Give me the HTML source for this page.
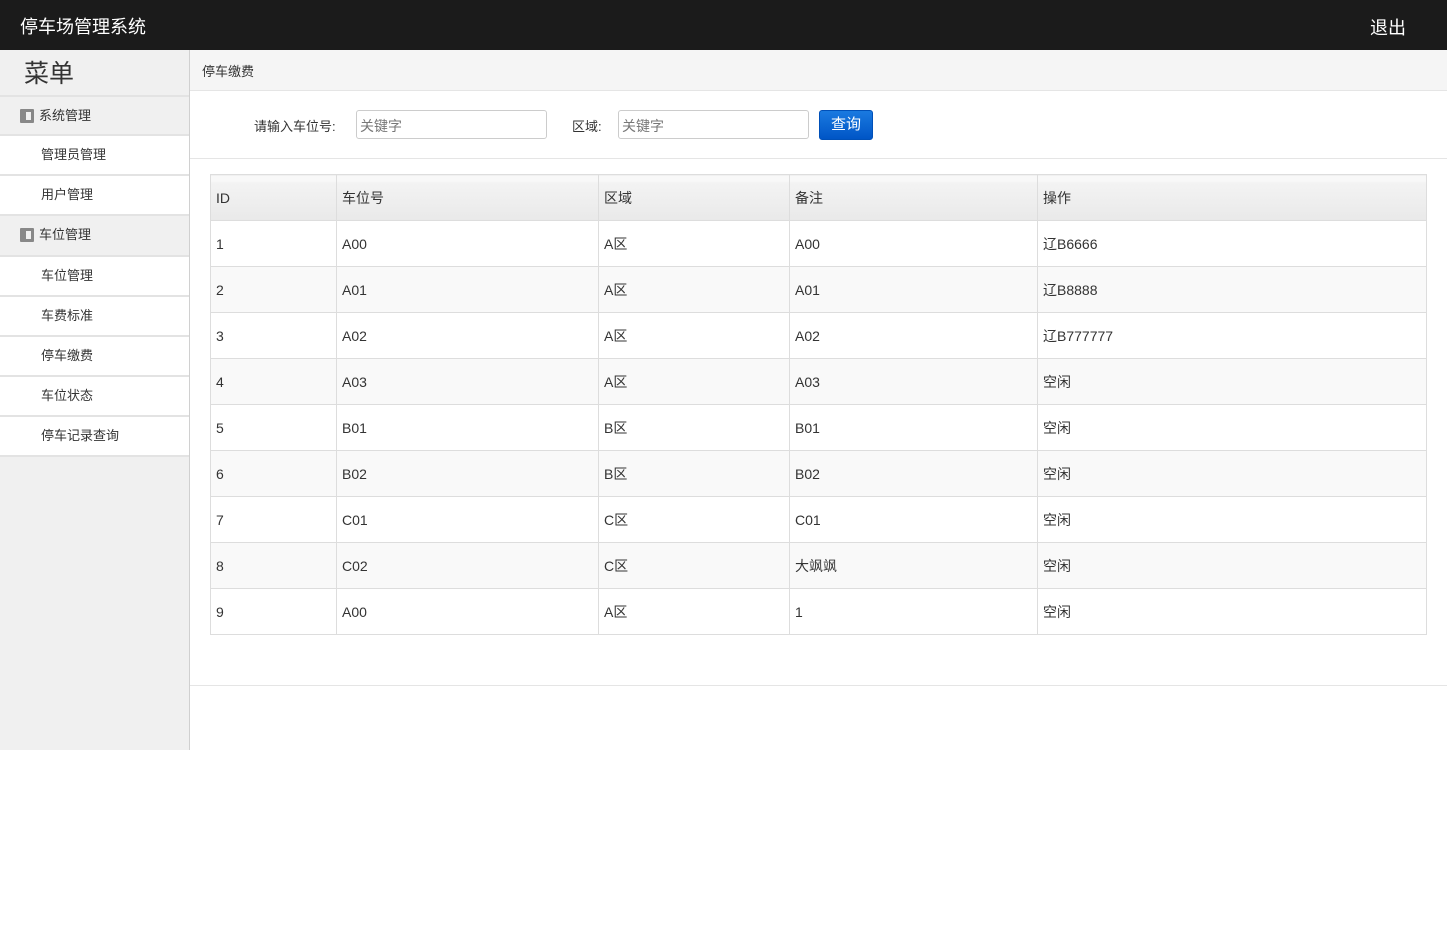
<!DOCTYPE html>
<html><head><meta charset="utf-8"><style>
*{margin:0;padding:0;box-sizing:border-box}
body{width:1447px;height:943px;background:#fff;font-family:"Liberation Sans","Noto Sans CJK SC",sans-serif;position:relative;overflow:hidden;color:#333}
.top{position:absolute;left:0;top:0;width:1447px;height:50px;background:#1b1b1b;color:#fff}
.top .t{position:absolute;left:20px;top:13px;font-size:18px}
.top .o{position:absolute;left:1370px;top:14px;font-size:18px}
.side{position:absolute;left:0;top:50px;width:190px;height:700px;background:#f0f0f0;border-right:1px solid #d0d0d0}
.menu{position:absolute;left:24px;top:54px;font-size:25px;color:#333}
.it{position:absolute;left:0;width:189px;height:38px;font-size:13px;line-height:38px}
.g{background:#f0f0f0;padding-left:39px;border-top:2px solid #e3e3e3}
.w{background:#fff;padding-left:41px}
.sep{position:absolute;left:0;width:189px;height:2px;background:#e3e3e3}
.ic{position:absolute;left:20px;top:12px;width:14px;height:14px;background:#888;border-radius:1px}
.ic:after{content:"";position:absolute;left:6px;top:3px;width:5px;height:8px;background:#f0f0f0}
.bc{position:absolute;left:190px;top:50px;width:1257px;height:41px;background:#f5f5f5;border-bottom:1px solid #e5e5e5;font-size:13px;padding:11px 0 0 12px}
.lbl{position:absolute;font-size:13px;top:116px}
.inp{position:absolute;top:110px;height:29px;border:1px solid #ccc;border-radius:3px;font-size:14px;color:#777;padding:5px 3px}
.btn{position:absolute;left:819px;top:110px;width:54px;height:30px;background:linear-gradient(#1a7ae0,#0055c6);border:1px solid #0050b8;border-radius:3px;color:#fff;font-size:15px;text-align:center;line-height:28px}
.hl{position:absolute;left:190px;width:1257px;height:1px;background:#e5e5e5}
table{position:absolute;left:210px;top:174px;width:1217px;border-collapse:collapse;font-size:14px}
td,th{border:1px solid #ddd;padding:0 5px;text-align:left;font-weight:normal;height:46px}
th{background:linear-gradient(#f8f8f8 0,#f8f8f8 6px,#f3f3f3 7px,#e9e9e9);height:46px}
tr:nth-child(odd) td{background:#f9f9f9}
</style></head><body>
<div class="top"><span class="t">停车场管理系统</span><span class="o">退出</span></div>
<div class="side"></div>
<div class="menu">菜单</div>
<div class="it g" style="top:95px;height:40px"><span class="ic"></span>系统管理</div>
<div class="sep" style="top:134px"></div>
<div class="it w" style="top:136px">管理员管理</div>
<div class="sep" style="top:174px"></div>
<div class="it w" style="top:176px">用户管理</div>
<div class="sep" style="top:214px;height:3px"></div>
<div class="it g" style="top:216px;height:40px;border-top:0"><span class="ic" style="top:12px"></span>车位管理</div>
<div class="sep" style="top:255px"></div>
<div class="it w" style="top:257px">车位管理</div>
<div class="sep" style="top:295px"></div>
<div class="it w" style="top:297px">车费标准</div>
<div class="sep" style="top:335px"></div>
<div class="it w" style="top:337px">停车缴费</div>
<div class="sep" style="top:375px"></div>
<div class="it w" style="top:377px">车位状态</div>
<div class="sep" style="top:415px"></div>
<div class="it w" style="top:417px">停车记录查询</div>
<div class="sep" style="top:455px"></div>
<div class="bc">停车缴费</div>
<div class="lbl" style="left:254px">请输入车位号:</div>
<div class="inp" style="left:356px;width:191px">关键字</div>
<div class="lbl" style="left:572px">区域:</div>
<div class="inp" style="left:618px;width:191px">关键字</div>
<div class="btn">查询</div>
<div class="hl" style="top:158px"></div>
<table>
<tr><th style="width:126px">ID</th><th style="width:262px">车位号</th><th style="width:191px">区域</th><th style="width:248px">备注</th><th>操作</th></tr>
<tr><td>1</td><td>A00</td><td>A区</td><td>A00</td><td>辽B6666</td></tr>
<tr><td>2</td><td>A01</td><td>A区</td><td>A01</td><td>辽B8888</td></tr>
<tr><td>3</td><td>A02</td><td>A区</td><td>A02</td><td>辽B777777</td></tr>
<tr><td>4</td><td>A03</td><td>A区</td><td>A03</td><td>空闲</td></tr>
<tr><td>5</td><td>B01</td><td>B区</td><td>B01</td><td>空闲</td></tr>
<tr><td>6</td><td>B02</td><td>B区</td><td>B02</td><td>空闲</td></tr>
<tr><td>7</td><td>C01</td><td>C区</td><td>C01</td><td>空闲</td></tr>
<tr><td>8</td><td>C02</td><td>C区</td><td>大飒飒</td><td>空闲</td></tr>
<tr><td>9</td><td>A00</td><td>A区</td><td>1</td><td>空闲</td></tr>
</table>
<div class="hl" style="top:685px"></div>
</body></html>
